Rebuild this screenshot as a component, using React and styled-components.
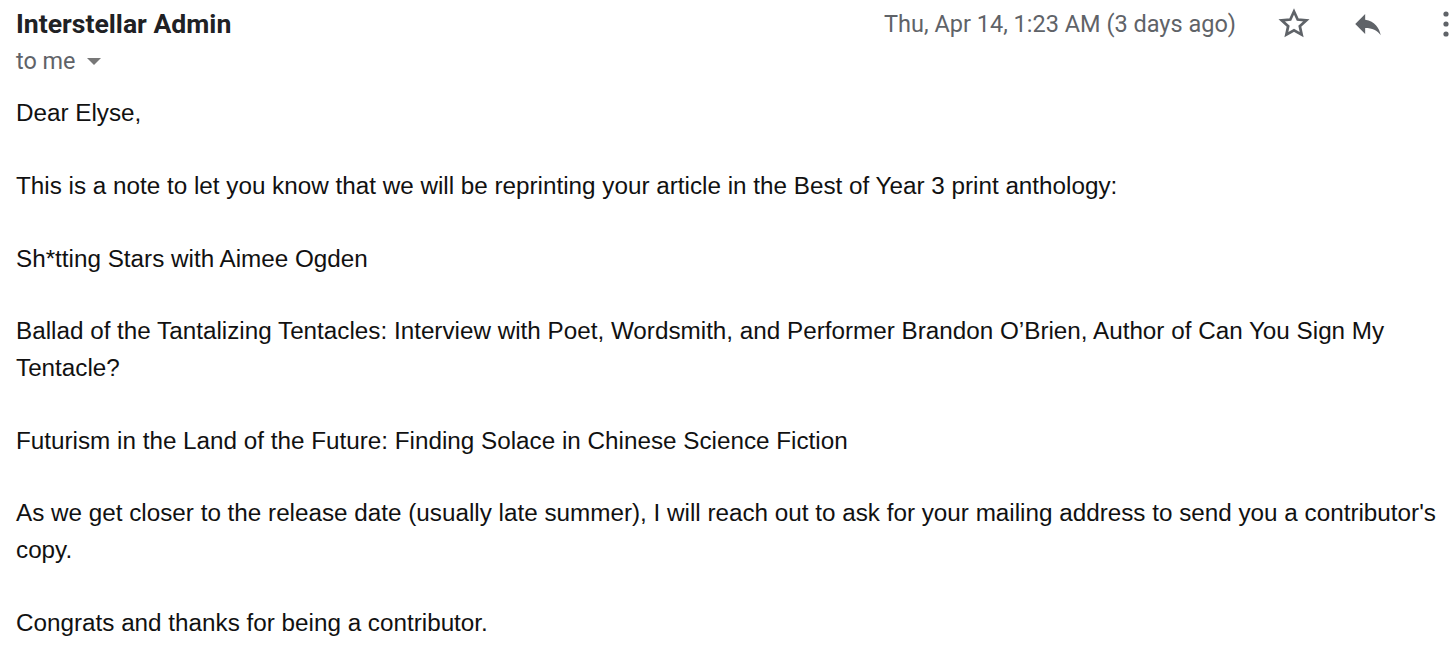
import React from "react";
import styled, { createGlobalStyle } from "styled-components";

const GlobalStyle = createGlobalStyle`
  html, body {
    margin: 0;
    padding: 0;
    background: #ffffff;
  }
`;

const Page = styled.div`
  width: 1456px;
  height: 657px;
  overflow: hidden;
  padding: 0 0 0 16px;
  box-sizing: border-box;
`;

const Header = styled.div`
  display: flex;
  justify-content: space-between;
  align-items: flex-start;
`;

const Sender = styled.div`
  display: flex;
  flex-direction: column;
`;

const Name = styled.div`
  font-family: Roboto, "Liberation Sans", sans-serif;
  font-weight: 700;
  font-size: 26.6px;
  line-height: 28px;
  margin-top: 10px;
  color: #202124;
`;

const To = styled.div`
  display: flex;
  align-items: center;
  gap: 8px;
  margin-top: 9px;
  font-family: Roboto, "Liberation Sans", sans-serif;
  font-size: 23.4px;
  line-height: 28px;
  color: #5f6368;
`;

const Caret = styled.span`
  width: 0;
  height: 0;
  border-left: 7px solid transparent;
  border-right: 7px solid transparent;
  border-top: 7px solid #777;
  margin-left: 4px;
`;

const Meta = styled.div`
  display: flex;
  align-items: center;
  margin-top: 6px;
`;

const Date = styled.span`
  font-family: Roboto, "Liberation Sans", sans-serif;
  font-size: 23.5px;
  color: #5f6368;
  margin-right: 40px;
`;

const IconButton = styled.span`
  display: flex;
  align-items: center;
  justify-content: center;
  width: ${(p) => p.$w || 36}px;
  height: 36px;
  margin-right: ${(p) => p.$gap || 0}px;
`;

const Body = styled.div`
  margin-top: 20px;
  font-family: Arial, "Liberation Sans", sans-serif;
  font-size: 24.25px;
  line-height: 36.4px;
  color: #111;
`;

const Para = styled.p`
  margin: 0 0 36.4px;
`;

const StarIcon = () => (
  <svg width="34" height="34" viewBox="0 0 24 24" fill="none">
    <path
      d="M12 3.2l2.6 5.6 6.1.6-4.6 4.1 1.3 6-5.4-3.1-5.4 3.1 1.3-6L3.3 9.4l6.1-.6z"
      stroke="#5f6368"
      strokeWidth="1.9"
      strokeLinejoin="miter"
    />
  </svg>
);

const ReplyIcon = () => (
  <svg width="34" height="34" viewBox="0 0 24 24">
    <path
      d="M10 9V5l-7 7 7 7v-4.1c5 0 8.5 1.6 11 5.1-1-5-4-10-11-11z"
      fill="#5f6368"
    />
  </svg>
);

const MoreIcon = () => (
  <svg width="10" height="34" viewBox="0 0 10 34">
    <circle cx="5" cy="7" r="2.6" fill="#5f6368" />
    <circle cx="5" cy="17" r="2.6" fill="#5f6368" />
    <circle cx="5" cy="27" r="2.6" fill="#5f6368" />
  </svg>
);

export default function App() {
  return (
    <Page>
      <GlobalStyle />
      <Header>
        <Sender>
          <Name>Interstellar Admin</Name>
          <To>
            to me <Caret />
          </To>
        </Sender>
        <Meta>
          <Date>Thu, Apr 14, 1:23 AM (3 days ago)</Date>
          <IconButton $gap={38}>
            <StarIcon />
          </IconButton>
          <IconButton $gap={50}>
            <ReplyIcon />
          </IconButton>
          <IconButton $w={20}>
            <MoreIcon />
          </IconButton>
        </Meta>
      </Header>
      <Body>
        <Para>Dear Elyse,</Para>
        <Para>
          This is a note to let you know that we will be reprinting your article
          in the Best of Year 3 print anthology:
        </Para>
        <Para>Sh*tting Stars with Aimee Ogden</Para>
        <Para>
          Ballad of the Tantalizing Tentacles: Interview with Poet, Wordsmith,
          and Performer Brandon O’Brien, Author of Can You Sign My Tentacle?
        </Para>
        <Para>
          Futurism in the Land of the Future: Finding Solace in Chinese Science
          Fiction
        </Para>
        <Para>
          As we get closer to the release date (usually late summer), I will
          reach out to ask for your mailing address to send you a contributor's
          copy.
        </Para>
        <Para>Congrats and thanks for being a contributor.</Para>
      </Body>
    </Page>
  );
}
